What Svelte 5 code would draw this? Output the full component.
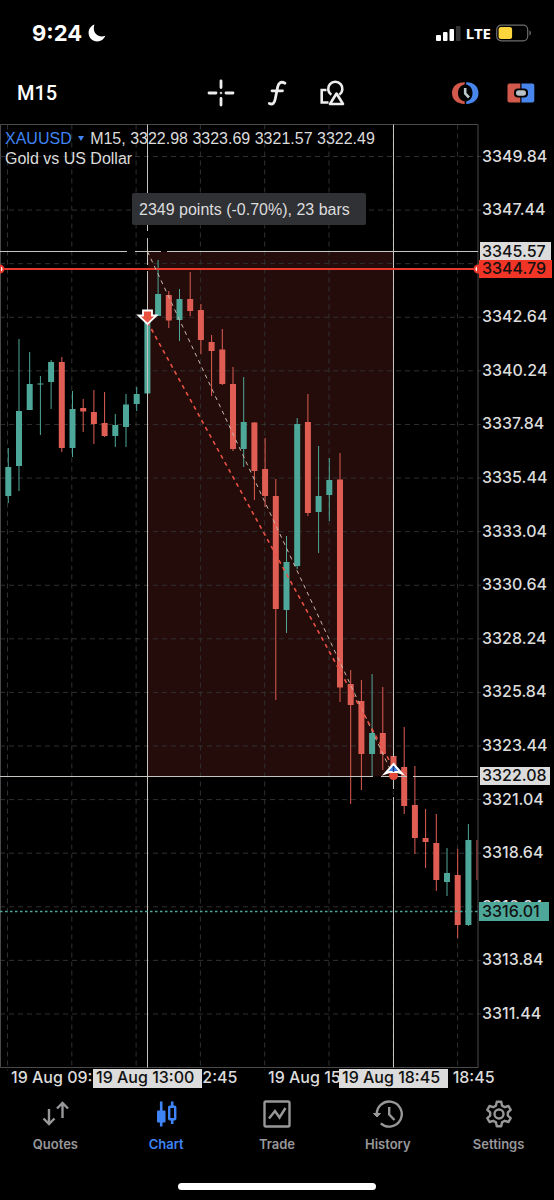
<script>
	// Price axis: 3349.84 sits at y 156.5, one grid step is 2.4
	const topPrice = 3349.84;
	const topY = 156.5;
	const perPoint = 22.33;
	const right = 478;
	const top = 124.5;
	const bottom = 1067.5;

	const priceToY = (price) => topY + (topPrice - price) * perPoint;
	const barToX = (i) => 8.3 + i * 10.7;

	const prices = Array.from({ length: 17 }, (_, i) => topPrice - i * 2.4);
	const hiddenPrices = [2]; // covered by the cursor tags
	const columns = Array.from({ length: 8 }, (_, i) => 7.5 + i * 64.3);
	const times = ["19 Aug 09:45", "19 Aug 12:45", "19 Aug 15:45", "19 Aug 18:45"];

	const start = { x: 147.5, y: 251.5 };
	const end = { x: 393.5, y: 776.5 };

	// [direction, high, body top, body bottom, low]
	const candles = [
		["up", 448, 467, 496, 503],
		["up", 339, 411, 466, 491],
		["up", 352, 384, 410, 410],
		["up", 376, 383.5, 384.5, 435],
		["up", 360, 362, 382, 409],
		["down", 357, 362, 448, 452],
		["up", 391, 409, 448, 457],
		["down", 399, 408, 411.5, 432],
		["down", 390, 412, 424, 444],
		["down", 392, 423, 436, 437],
		["up", 414, 425, 436, 447],
		["up", 394, 404.5, 427, 447],
		["up", 387, 394, 404, 411],
		["up", 318, 318, 393.5, 393.5],
		["up", 260, 294, 316, 316],
		["down", 291, 295, 320.5, 328],
		["up", 289, 299, 320, 341],
		["down", 272, 299, 311, 316],
		["down", 304, 310, 340, 354],
		["down", 335, 342, 351, 396],
		["down", 329, 349.5, 384, 385],
		["down", 367, 384, 449, 451],
		["up", 377, 422, 449, 467],
		["down", 422, 422.5, 471, 500],
		["down", 438, 469, 496, 507],
		["down", 479, 496, 609, 700],
		["up", 536, 562, 610, 633],
		["up", 418, 424, 566, 569],
		["down", 394, 422, 513, 516],
		["up", 446, 496, 512, 553],
		["up", 458, 480, 495, 521],
		["down", 453, 479.5, 687.5, 702],
		["down", 670, 684, 705, 804],
		["down", 680, 701, 754, 790],
		["up", 674, 733, 754, 776],
		["down", 687, 733, 754, 770],
		["down", 756, 756, 779, 779],
		["down", 727, 767, 806, 814],
		["down", 766, 805, 838, 854],
		["down", 809, 838, 842, 868],
		["down", 814, 843, 880, 891],
		["up", 848, 873, 882, 896],
		["down", 849, 875, 925, 938],
		["up", 824, 840, 925, 926]
	];
</script>

<div class="app">
	<header class="status">
		<div class="clock">
			<span>9:24</span>
			<svg width="18" height="18" viewBox="0 0 18 18" aria-hidden="true">
				<path d="M6.400.6C3 1.900.6 5.100.6 8.900c0 4.800 3.800 8.500 8.600 8.500 3.700 0 6.800-2.200 8.100-5.700-1.200.5-2.300.7-3.500.7-4.600 0-8-3.500-8-7.900 0-1.400.2-2.600.6-3.900z" fill="#fff" />
			</svg>
		</div>
		<div class="signal">
			<svg width="26" height="18" viewBox="0 0 26 18" aria-hidden="true">
				<rect x="1" y="11" width="5" height="6" rx="1" fill="#fff" />
				<rect x="8" y="8" width="4.500" height="9" rx="1" fill="#fff" />
				<rect x="14.500" y="5" width="4.500" height="12" rx="1" fill="#fff" />
				<rect x="21" y="2" width="4.500" height="15" rx="1" fill="#333" />
			</svg>
			<span class="lte">LTE</span>
			<svg width="36" height="18" viewBox="0 0 36 18" aria-hidden="true">
				<rect x="0.700" y="1.200" width="31" height="15.600" rx="4.500" fill="none" stroke="#6c6c6e" stroke-width="1.200" />
				<rect x="2.600" y="3" width="13.500" height="12" rx="2.500" fill="#ffd53e" />
				<path d="M33.500 6.500c1.800.6 1.800 4.400 0 5z" fill="#77777a" />
			</svg>
		</div>
	</header>

	<nav class="toolbar" aria-label="Chart tools">
		<button class="timeframe">M15</button>
		<div class="tools">
			<button aria-label="Crosshair">
				<svg width="32" height="32" viewBox="0 0 32 32" stroke="#eee" stroke-width="2.800" stroke-linecap="round" fill="none">
					<path d="M16 4v6.500M16 21.500V28M4 16h7M21 16h7" />
					<circle cx="16" cy="16" r="0.400" stroke-width="1.800" />
				</svg>
			</button>
			<button aria-label="Indicators">
				<svg width="32" height="32" viewBox="0 0 32 32" stroke="#eee" stroke-width="2.800" stroke-linecap="round" fill="none">
					<path d="M24 6.200C20 4 17.500 6 16.700 9.800l-2.400 12c-.8 4.300-2.600 6.200-6 4.700M11 13.800h10.500" />
				</svg>
			</button>
			<button aria-label="Objects">
				<svg width="32" height="32" viewBox="0 0 32 32" stroke="#eee" stroke-width="2.600" fill="none">
					<path d="M9.500 13H4.700v12.500H11.500" />
					<path d="M14.300 17.700A7.100 7.100 0 1 1 22.300 17.700" />
					<path d="M19.500 16.500L26 27H13z" stroke-linejoin="round" />
				</svg>
			</button>
		</div>
		<div class="actions">
			<button aria-label="Trading sessions">
				<svg width="32" height="32" viewBox="0 0 32 32" fill="none">
					<path d="M15.700 5.200C8 5 3 9.500 3 16s5 11 12.700 10.900v-2.400C11 23.500 9 20 9 16s2-7.500 6.700-8.500z" fill="#d3594c" />
					<path d="M17.200 5.200C24.500 5 29.500 9.500 29.500 16s-5 11-12.300 10.900v-2.400C21.500 23.500 23.500 20 23.500 16s-2-7.500-6.300-8.500z" fill="#4886ee" />
					<path d="M16.200 11v5.500l3.800 4" stroke="#bcc7cb" stroke-width="2.600" />
				</svg>
			</button>
			<button aria-label="One click trading">
				<svg width="32" height="32" viewBox="0 0 32 32">
					<path d="M15.300 6.500H4.500a2 2 0 0 0-2 2v15a2 2 0 0 0 2 2h10.800z" fill="#d3594c" />
					<path d="M16.500 6.500h10.800a2 2 0 0 1 2 2v15a2 2 0 0 1-2 2H16.500z" fill="#4886ee" />
					<rect x="9" y="11.500" width="14" height="9" rx="4" fill="#000" />
					<rect x="11" y="13.300" width="10" height="5.500" rx="2.700" fill="#b9c2c7" />
				</svg>
			</button>
		</div>
	</nav>

	<main class="chart">
		<svg class="plot" viewBox="0 124 554 966" role="img" aria-label="XAUUSD candlestick chart">
			<rect x={start.x} y={start.y} width={end.x - start.x} height={end.y - start.y} fill="#230c09" />

			<g class="grid">
				{#each prices as price}
					<line x1="0" x2={right + 3} y1={priceToY(price)} y2={priceToY(price)} />
				{/each}
				{#each columns as x}
					<line x1={x} x2={x} y1={top} y2={bottom + 3} />
				{/each}
			</g>

			{#each candles as [dir, high, bodyTop, bodyBottom, low], i}
				<g class={dir}>
					<line class="wick" x1={barToX(i)} x2={barToX(i)} y1={high} y2={low} />
					<rect x={barToX(i) - 3} y={bodyTop} width="6" height={bodyBottom - bodyTop} />
				</g>
			{/each}
			<g class="down">
				<line class="wick" x1="477" x2="477" y1="840" y2="880" />
			</g>

			<path class="frame" d="M0.5 {bottom}V{top}H{right}V{bottom}z" />

			<!-- cursor lines, with gaps around both anchor points -->
			<g class="cursor">
				<path d="M{start.x} {top}V231M{start.x} 238V265M{start.x} 271V{bottom}" />
				<path d="M0 {start.y}H127M135 {start.y}H161M167 {start.y}H{right}" />
				<path d="M{end.x} {top}V757M{end.x} 763V789M{end.x} 797V{bottom}" />
				<path d="M0 {end.y}H373M381 {end.y}H407M413 {end.y}H{right}" />
			</g>

			<line class="level" x1="0" x2={right} y1="269" y2="269" />
			<path d="M0 265.5a3.500 3.500 0 0 1 0 7z" fill="#fff" stroke="#e8382c" stroke-width="2" />
			<path d="M{right} 265.500a3.500 3.500 0 0 0 0 7z" fill="#fff" stroke="#e8382c" stroke-width="2" />
			<line x1="0" x2={right} y1="911.5" y2="911.5" stroke="#4ea89a" stroke-width="1.500" stroke-dasharray="2.500 2.500" />

			<line x1={start.x} y1={start.y} x2={end.x} y2={end.y} stroke="#c9b8ac" stroke-dasharray="4 4" />
			<line x1={start.x} y1="322" x2={end.x} y2="768" stroke="#ea5145" stroke-width="1.600" stroke-dasharray="4 4" />

			<path d="M143 310.500h9v5h4.500l-9 8.500-9-8.500h4.500z" fill="#e9503f" stroke="#fff" stroke-width="1.800" />
			<circle cx={end.x} cy="775.500" r="4.500" fill="#e34a3c" />
			<path d="M393.500 764l8.500 9.500-4.500-1.500h-8l-4.500 1.500z" fill="#3f7fe8" stroke="#fff" stroke-width="2" />
			<path d="M393.500 766v6" stroke="#183a78" stroke-width="1.500" />

			<g class="axis">
				{#each prices as price, i}
					{#if !hiddenPrices.includes(i)}
						<text x="482" y={priceToY(price) + 5}>{price.toFixed(2)}</text>
					{/if}
				{/each}
				{#each times as time, i}
					<text x={11 + i * 128.5} y="1083">{time}</text>
				{/each}
			</g>

			<g class="axis tags">
				<rect x="480" y="242" width="71" height="19" fill="#dcdcdc" />
				<text x="482" y="257">3345.57</text>
				<rect x="479" y="260" width="73" height="18" fill="#f03527" />
				<text x="482" y="274">3344.79</text>
				<rect x="480" y="767" width="70" height="18" fill="#dcdcdc" />
				<text x="482" y="781">3322.08</text>
				<rect x="479" y="902" width="70" height="19" fill="#4ea89a" />
				<text x="482" y="917">3316.01</text>
				<rect x="93" y="1069" width="109" height="19" fill="#dcdcdc" />
				<text x="96" y="1083">19 Aug 13:00</text>
				<rect x="339" y="1069" width="109" height="19" fill="#dcdcdc" />
				<text x="342" y="1083">19 Aug 18:45</text>
			</g>
		</svg>

		<div class="legend">
			<div><button class="symbol">XAUUSD <span class="caret"></span></button>M15, 3322.98 3323.69 3321.57 3322.49</div>
			<div>Gold vs US Dollar</div>
		</div>
		<div class="measure">2349 points (-0.70%), 23 bars</div>
	</main>

	<nav class="tabs" aria-label="Main">
		<a href="#quotes">
			<svg width="32" height="32" viewBox="0 0 32 32">
				<path d="M10 11v15M4.500 20.500L10 26l5.500-5.500M23.500 20V5M18 10.500L23.500 5l5.500 5.500" />
			</svg>
			Quotes
		</a>
		<a href="#chart" class="active" aria-current="page">
			<svg width="32" height="32" viewBox="0 0 32 32">
				<path d="M11.200 3.500v25" stroke-width="2.600" />
				<rect x="7" y="12.500" width="8.500" height="12" rx="1" fill="currentColor" stroke="none" />
				<path d="M22.200 3.500v5M22.200 21.500v4.500" stroke-width="2.600" />
				<rect x="19.200" y="8.700" width="6" height="12.600" rx="0.500" stroke-width="2.400" />
			</svg>
			Chart
		</a>
		<a href="#trade">
			<svg width="32" height="32" viewBox="0 0 32 32">
				<rect x="3.500" y="3.500" width="25" height="25" rx="1.500" />
				<path d="M8 20.500l6-7.500 4.500 6.500 6-9.500" />
			</svg>
			Trade
		</a>
		<a href="#history">
			<svg width="32" height="32" viewBox="0 0 32 32">
				<path d="M4.800 17A12.500 12.500 0 1 1 8.800 25.300" />
				<path d="M1.500 15.500h7l-3.500 3.500z" fill="currentColor" stroke-width="1" />
				<path d="M17.200 9v7.500l5.300 5.500" />
			</svg>
			History
		</a>
		<a href="#settings">
			<svg width="32" height="32" viewBox="0 0 32 32">
				<path d="M13.800 3.800h4.400l.8 3.800 2.800 1.600 3.700-1.200 2.200 3.800-2.900 2.600v3.200l2.900 2.600-2.200 3.800-3.700-1.200-2.800 1.600-.8 3.800h-4.400l-.8-3.800-2.800-1.600L6.500 24l-2.200-3.800 2.900-2.600v-3.200l-2.900-2.600L6.500 8l3.700 1.200L13 7.600z" stroke-linejoin="round" />
				<circle cx="16" cy="16" r="4.500" />
			</svg>
			Settings
		</a>
	</nav>
	<div class="home"></div>
</div>

<style>
	:global(body) {
		background: #000;
	}

	.app {
		background: #000;
		color: #dcdcdc;
		font-family: Inter, "Liberation Sans", sans-serif;
	}

	button {
		padding: 0;
		border: none;
		background: none;
		color: inherit;
		font: inherit;
		cursor: pointer;
	}

	svg {
		display: block;
	}

	.status {
		display: flex;
		justify-content: space-between;
		align-items: center;
		height: 66px;
		padding: 0 22px 0 32px;
		color: #fff;
	}

	.clock {
		display: flex;
		align-items: center;
		gap: 6px;
		font-size: 22px;
		font-weight: 700;
	}

	.signal {
		display: flex;
		align-items: center;
		gap: 5px;
	}

	.lte {
		font-family: "Noto Sans", sans-serif;
		font-size: 15px;
		font-weight: 700;
	}

	.toolbar {
		display: grid;
		grid-template-columns: 1fr auto 1fr;
		align-items: center;
		height: 54px;
		padding: 0 17px 4px;
	}

	.timeframe {
		justify-self: start;
		color: #fff;
		font-family: Roboto, sans-serif;
		font-size: 20px;
		font-weight: 500;
	}

	.tools,
	.actions {
		display: flex;
		gap: 24px;
	}

	.actions {
		justify-self: end;
	}

	.chart {
		position: relative;
	}

	.plot {
		width: 100%;
		height: auto;
	}

	.grid line {
		stroke: #303032;
		stroke-dasharray: 5 4;
	}

	.up {
		fill: #4ea89a;
		stroke: #4ea89a;
	}

	.down {
		fill: #e05d54;
		stroke: #e05d54;
	}

	.up rect,
	.down rect {
		stroke: none;
	}

	.wick {
		stroke-width: 1;
	}

	.frame {
		fill: none;
		stroke: #4a4a4a;
	}

	.cursor path {
		stroke: #c8c4bf;
	}

	.level {
		stroke: #e8382c;
		stroke-width: 2;
	}

	.axis text {
		fill: #dcdcdc;
		font-size: 16px;
		font-weight: 500;
	}

	.axis.tags text {
		fill: #111;
	}

	/* overlays on the plot */
	.legend {
		position: absolute;
		top: 5px;
		left: 5px;
		font-family: "Liberation Sans", Arial, sans-serif;
		font-size: 16px;
		line-height: 20px;
	}

	.symbol {
		margin-right: 6px;
		color: #3f84f5;
	}

	.caret {
		display: inline-block;
		margin: 0 0 3px 2px;
		border: 3px solid transparent;
		border-top: 5px solid #3f84f5;
		border-bottom: none;
	}

	.measure {
		position: absolute;
		top: 69px;
		left: 132px;
		padding: 1px 16px 0 7px;
		border-radius: 2px;
		background: #303135;
		font-family: "Liberation Sans", Arial, sans-serif;
		font-size: 16px;
		line-height: 31px;
	}

	.tabs {
		display: grid;
		grid-template-columns: repeat(5, 1fr);
		padding: 8px 0 0;
	}

	.tabs a {
		display: flex;
		flex-direction: column;
		align-items: center;
		gap: 6px;
		color: #98989a;
		font-size: 13px;
		font-weight: 600;
		line-height: 16px;
		text-decoration: none;
	}

	.tabs .active {
		color: #3f84f5;
	}

	.tabs svg {
		fill: none;
		stroke: currentColor;
		stroke-width: 2.4;
	}

	.home {
		width: 198px;
		height: 7px;
		margin: 31px auto 0;
		border-radius: 4px;
		background: #fff;
	}
</style>
